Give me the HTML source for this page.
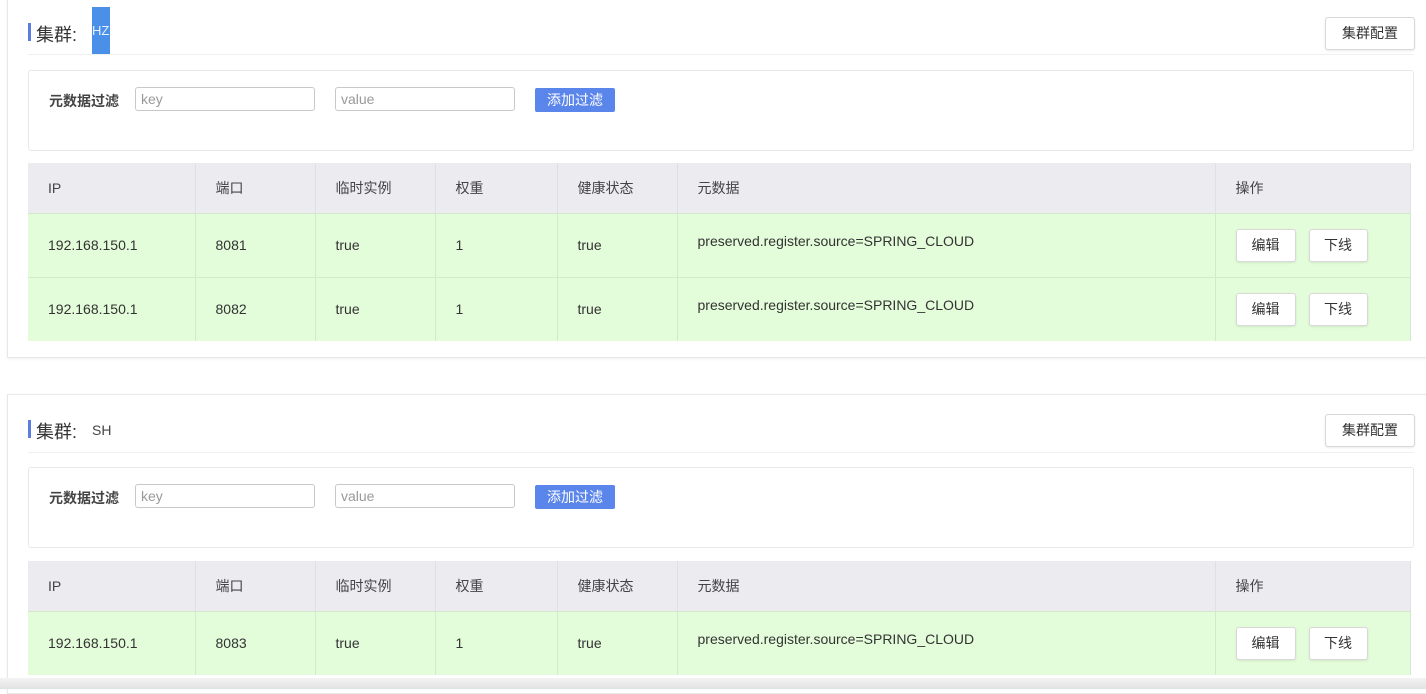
<!DOCTYPE html>
<html><head><meta charset="utf-8"><style>
*{box-sizing:border-box;margin:0;padding:0}
body{width:1426px;height:689px;overflow:hidden;background:#fff;font-family:"Liberation Sans","Noto Sans CJK SC",sans-serif;color:#333;position:relative}
.abs{position:absolute}
.card{position:absolute;left:7px;width:1430px;background:#fff;border:1px solid #e8e8ec;box-shadow:0 1px 3px rgba(0,0,0,.06)}
.bar{position:absolute;width:3px;height:18px;background:#5b7de0}
.title{position:absolute;font-size:18px;color:#333}
.hr{position:absolute;left:28px;width:1386px;height:1px;background:#eef0f3}
.cfg{position:absolute;left:1325px;width:90px;height:33px;border:1px solid #d8d8d8;border-radius:3px;background:#fff;font-size:14px;line-height:31px;text-align:center;color:#333;box-shadow:0 1px 2px rgba(0,0,0,.08)}
.filter{position:absolute;left:28px;width:1386px;height:81px;border:1px solid #e6e8ec;border-radius:3px;background:#fff}
.flabel{position:absolute;left:20px;top:20px;font-size:14px;font-weight:bold;color:#444}
.inp{position:absolute;top:16px;width:180px;height:24px;border:1px solid #c8c8c8;border-radius:3px;font-size:14px;color:#999;padding-left:5px;line-height:22px}
.add{position:absolute;left:506px;top:17px;width:80px;height:24px;background:#5a85ea;color:#fff;font-size:14px;line-height:24px;text-align:center;border-radius:2px}
.tbl{position:absolute;left:28px;width:1382px;border-collapse:collapse;font-size:14px;table-layout:fixed}
.tbl th{background:#ebebf0;font-weight:normal;text-align:left;height:50px;padding-left:20px;border-right:1px solid #dfe0e4;color:#444}
.tbl td{background:#e3fcd9;height:64px;padding-left:20px;border-right:1px solid #d4e8cc;border-top:1px solid #d4e8cc;color:#333}
.tbl td.meta{vertical-align:top;padding-top:19px}
.btn{display:inline-block;width:60px;height:33px;border:1px solid #d8d8d8;border-radius:3px;background:#fff;text-align:center;line-height:31px;font-size:14px;margin-right:13px;box-shadow:0 1px 2px rgba(0,0,0,.08)}
</style></head><body>

<div class="card" style="top:-2px;height:360px"></div>
<div class="bar" style="left:28px;top:23px"></div>
<div class="title" style="left:36px;top:21px">集群:</div>
<div class="abs" style="left:92px;top:7px;width:18px;height:48px;background:#4a90e8;color:#e8f0ff;font-size:13px;line-height:48px;overflow:hidden">HZ</div>
<div class="hr" style="top:54px"></div>
<div class="cfg" style="top:17px">集群配置</div>
<div class="filter" style="top:70px">
 <div class="flabel">元数据过滤</div>
 <div class="inp" style="left:106px">key</div>
 <div class="inp" style="left:306px">value</div>
 <div class="add">添加过滤</div>
</div>
<table class="tbl" style="top:163px">
<colgroup><col style="width:167px"><col style="width:120px"><col style="width:120px"><col style="width:122px"><col style="width:120px"><col style="width:538px"><col style="width:195px"></colgroup>
<tr><th>IP</th><th>端口</th><th>临时实例</th><th>权重</th><th>健康状态</th><th>元数据</th><th>操作</th></tr>
<tr><td>192.168.150.1</td><td>8081</td><td>true</td><td>1</td><td>true</td><td class="meta">preserved.register.source=SPRING_CLOUD</td><td><span class="btn">编辑</span><span class="btn" style="width:59px">下线</span></td></tr>
<tr><td>192.168.150.1</td><td>8082</td><td>true</td><td>1</td><td>true</td><td class="meta">preserved.register.source=SPRING_CLOUD</td><td><span class="btn">编辑</span><span class="btn" style="width:59px">下线</span></td></tr>
</table>

<div class="card" style="top:394px;height:300px"></div>
<div class="bar" style="left:28px;top:420px"></div>
<div class="title" style="left:36px;top:418px">集群:</div>
<div class="abs" style="left:92px;top:422px;font-size:14px;color:#444">SH</div>
<div class="hr" style="top:452px"></div>
<div class="cfg" style="top:414px">集群配置</div>
<div class="filter" style="top:467px">
 <div class="flabel">元数据过滤</div>
 <div class="inp" style="left:106px">key</div>
 <div class="inp" style="left:306px">value</div>
 <div class="add">添加过滤</div>
</div>
<table class="tbl" style="top:561px">
<colgroup><col style="width:167px"><col style="width:120px"><col style="width:120px"><col style="width:122px"><col style="width:120px"><col style="width:538px"><col style="width:195px"></colgroup>
<tr><th>IP</th><th>端口</th><th>临时实例</th><th>权重</th><th>健康状态</th><th>元数据</th><th>操作</th></tr>
<tr><td>192.168.150.1</td><td>8083</td><td>true</td><td>1</td><td>true</td><td class="meta">preserved.register.source=SPRING_CLOUD</td><td><span class="btn">编辑</span><span class="btn" style="width:59px">下线</span></td></tr>
</table>
<div class="abs" style="left:0;top:678px;width:1426px;height:11px;background:linear-gradient(#f3f3f3,#e2e2e2)"></div>
</body></html>
